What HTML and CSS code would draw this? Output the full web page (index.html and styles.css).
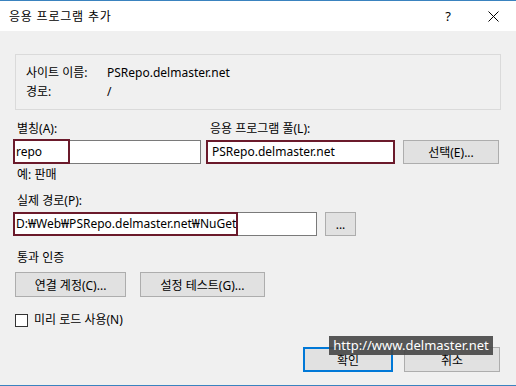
FILE: index.html
```html
<!DOCTYPE html>
<html lang="ko">
<head>
  <meta charset="UTF-8">
  <meta name="viewport" content="width=device-width, initial-scale=1.0">
  <title>응용 프로그램 추가</title>
  <link rel="stylesheet" href="styles.css">
</head>
<body>
  <div class="window">
    <div class="titlebar">
      <span class="title">응용 프로그램 추가</span>
      <span class="help">?</span>
      <span class="close">
        <svg width="11" height="11" viewBox="0 0 11 11"><path d="M0.5 0.5 L10.5 10.5 M10.5 0.5 L0.5 10.5" stroke="#000" stroke-width="1" fill="none"/></svg>
      </span>
    </div>

    <div class="content">
      <div class="info">
        <div class="info-row"><span class="info-key">사이트 이름:</span><span>PSRepo.delmaster.net</span></div>
        <div class="info-row"><span class="info-key">경로:</span><span>/</span></div>
      </div>

      <div class="row-top">
        <div class="field field-alias">
          <div class="label">별칭(A):</div>
          <div class="input">repo<span class="mark mark-alias"></span></div>
          <div class="hint">예: 판매</div>
        </div>
        <div class="field field-pool">
          <div class="label">응용 프로그램 풀(L):</div>
          <div class="input input-marked">PSRepo.delmaster.net</div>
        </div>
        <button class="btn btn-select">선택(E)...</button>
      </div>

      <div class="label">실제 경로(P):</div>
      <div class="row-path">
        <div class="input input-path">D:₩Web₩PSRepo.delmaster.net₩NuGet<span class="mark mark-path"></span></div>
        <button class="btn btn-browse">...</button>
      </div>

      <div class="label label-auth">통과 인증</div>
      <div class="row-auth">
        <button class="btn btn-connect">연결 계정(C)...</button>
        <button class="btn btn-test">설정 테스트(G)...</button>
      </div>

      <div class="check-row">
        <span class="checkbox"></span>
        <span>미리 로드 사용(N)</span>
      </div>

      <div class="footer">
        <button class="btn btn-ok">확인</button>
        <button class="btn btn-cancel">취소</button>
      </div>
    </div>

    <div class="watermark">http://www.delmaster.net</div>
  </div>
</body>
</html>
```

FILE: styles.css
```css
body {
  margin: 0;
  padding: 0;
  font-family: "Noto Sans", "Noto Sans CJK KR", sans-serif;
  font-size: 12px;
  color: #000;
  background-color: #f0f0f0;
}

.window {
  position: relative;
  width: 516px;
  height: 386px;
  box-sizing: border-box;
  border-top: 1px solid #3a83bf;
  border-bottom: 1px solid #3a83bf;
  background-color: #f0f0f0;
  overflow: hidden;
}

.titlebar {
  height: 30px;
  background-color: #fff;
  display: flex;
  align-items: center;
}

.title {
  margin-left: 9px;
  font-size: 12px;
  letter-spacing: 0.8px;
  flex: 1;
}

.help {
  font-size: 13px;
  margin-right: 37px;
}

.close {
  display: flex;
  margin-right: 17px;
}

.content {
  padding: 23px 0 0 13px;
}

.info {
  margin-left: 2px;
  width: 486px;
  height: 56px;
  box-sizing: border-box;
  border: 1px solid #dadada;
  padding: 8px 0 0 10px;
}

.info-row {
  height: 19px;
  line-height: 19px;
  display: flex;
}

.info-key {
  width: 81px;
}

.label {
  line-height: 16px;
  height: 16px;
  padding-left: 4px;
  margin-bottom: 3px;
}

.row-top {
  display: flex;
  margin-top: 11px;
}

.field-alias {
  width: 188px;
}

.field-pool {
  width: 189px;
  margin-left: 5px;
}

.input {
  position: relative;
  height: 24px;
  box-sizing: border-box;
  border: 1px solid #7a7a7a;
  background-color: #fff;
  line-height: 22px;
  padding-left: 2px;
  white-space: nowrap;
}

.input-marked {
  border: 2px solid #6b1a2b;
  line-height: 20px;
  padding-left: 4px;
}

.mark {
  position: absolute;
  border: 2px solid #6b1a2b;
  box-sizing: border-box;
  height: 25px;
  top: -2px;
  left: -1px;
}

.mark-alias {
  width: 57px;
}

.mark-path {
  width: 225px;
  top: -1px;
  height: 24px;
}

.hint {
  line-height: 16px;
  margin-top: 3px;
  padding-left: 4px;
}

.btn {
  font-family: "Noto Sans", "Noto Sans CJK KR", sans-serif;
  font-size: 12px;
  color: #000;
  background-color: #e1e1e1;
  border: 1px solid #adadad;
  padding: 0;
  height: 24px;
  box-sizing: border-box;
}

.btn-select {
  width: 96px;
  margin-left: 8px;
  margin-top: 19px;
}

.row-top + .label {
  margin-top: 10px;
}

.row-path {
  display: flex;
}

.input-path {
  width: 304px;
}

.btn-browse {
  width: 31px;
  margin-left: 8px;
}

.label-auth {
  margin-top: 14px;
  margin-bottom: 6px;
}

.row-auth {
  display: flex;
  margin-left: 2px;
}

.row-auth .btn {
  height: 25px;
}

.btn-connect {
  width: 111px;
}

.btn-test {
  width: 125px;
  margin-left: 14px;
}

.check-row {
  display: flex;
  align-items: center;
  margin: 15px 0 0 2px;
  height: 16px;
  line-height: 16px;
}

.checkbox {
  width: 13px;
  height: 13px;
  box-sizing: border-box;
  border: 1px solid #333;
  background-color: #fff;
  margin-right: 6px;
}

.footer {
  display: flex;
  justify-content: flex-end;
  margin-top: 19px;
  padding-right: 16px;
}

.footer .btn {
  height: 25px;
}

.btn-ok {
  width: 90px;
  border: 2px solid #0078d7;
}

.btn-cancel {
  width: 96px;
  margin-left: 11px;
}

.watermark {
  position: absolute;
  left: 329px;
  top: 335px;
  width: 164px;
  height: 19px;
  background-color: rgba(70, 70, 70, 0.9);
  color: #fff;
  font-size: 13px;
  line-height: 19px;
  text-align: center;
  white-space: nowrap;
}
```
